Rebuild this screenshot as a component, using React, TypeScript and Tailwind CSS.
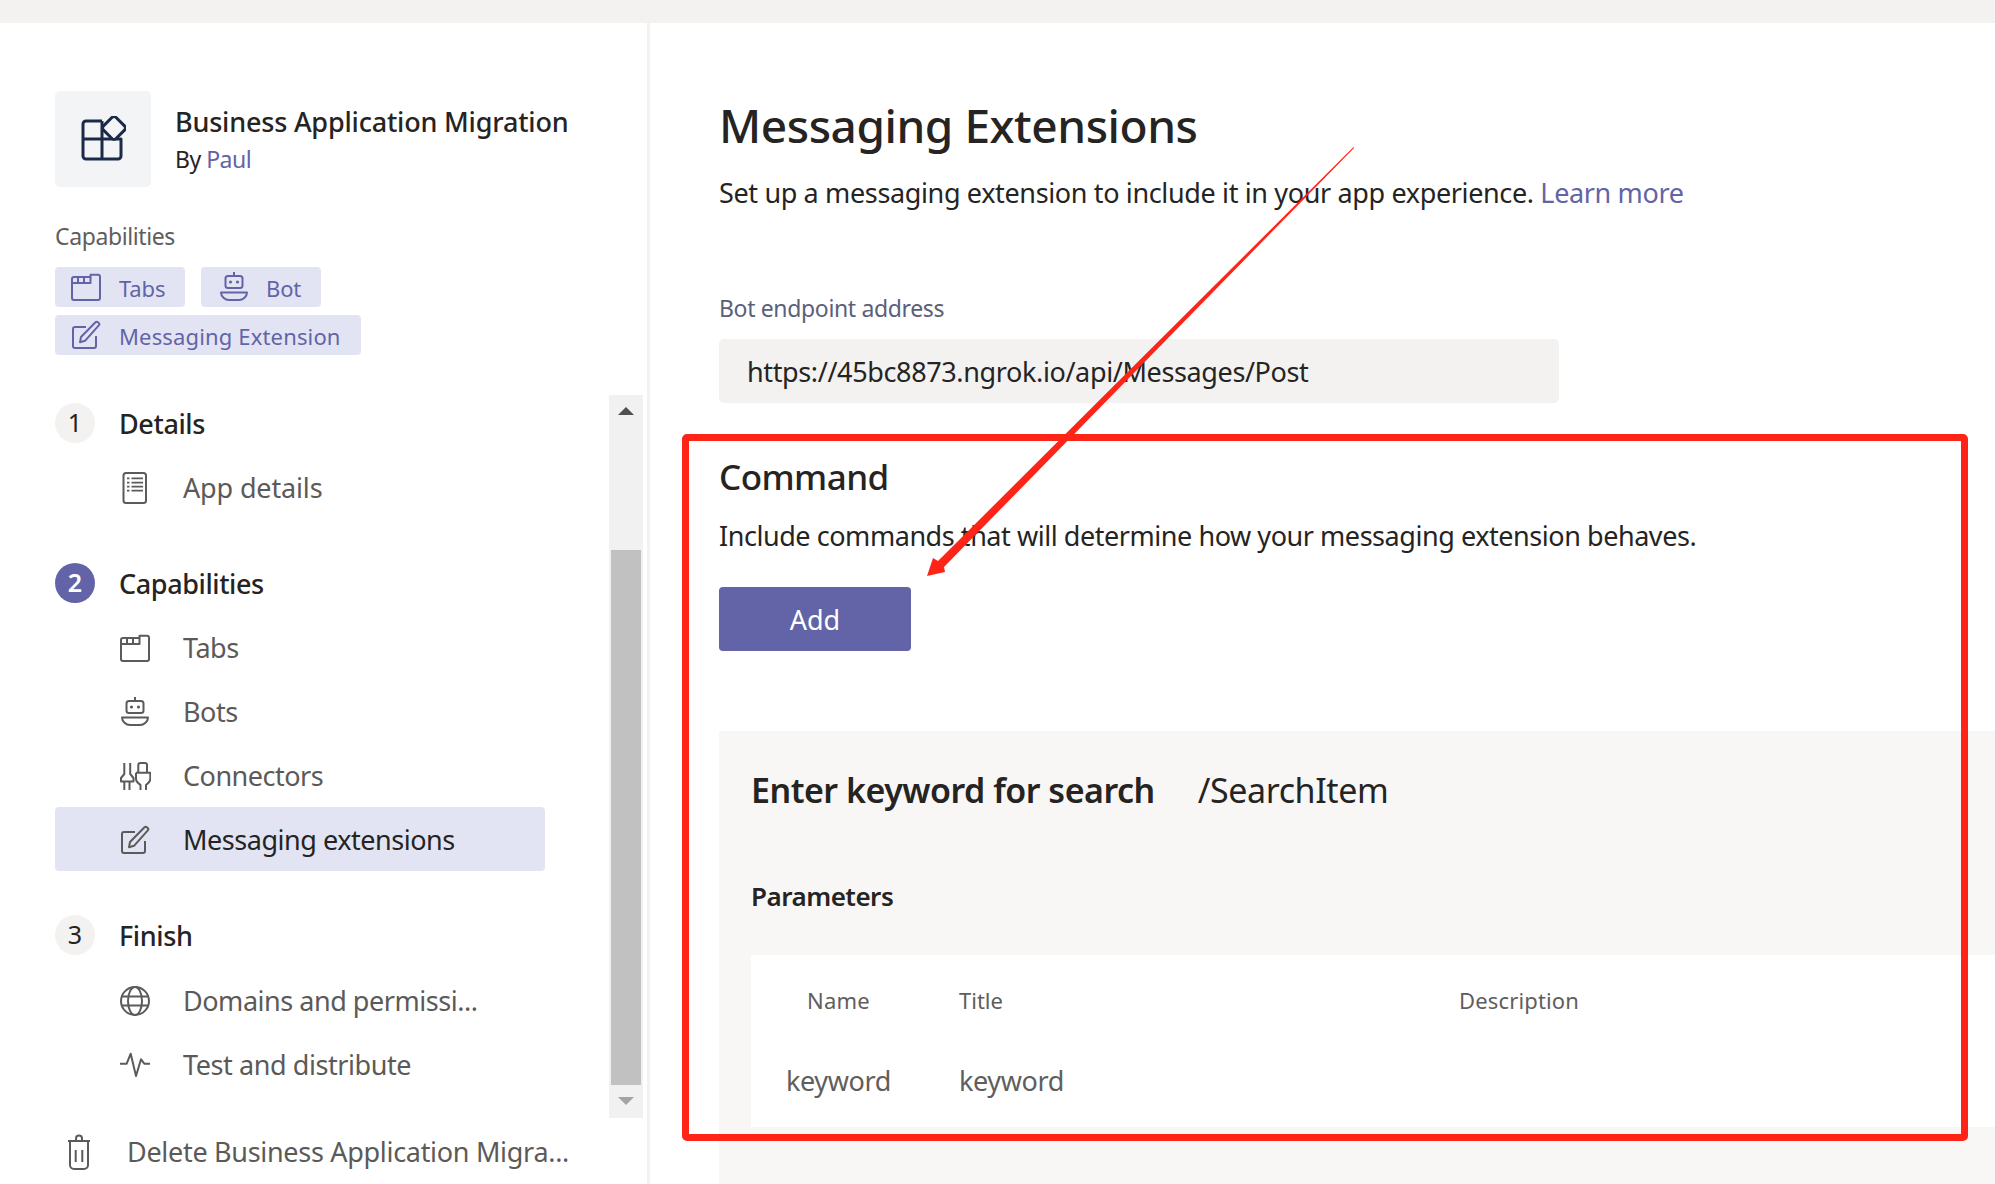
import React from "react";

function TabIcon({ c = "#5b5b5b" }: { c?: string }) {
  return (
    <svg width="30" height="30" viewBox="0 0 30 30" fill="none" stroke={c} strokeWidth="2" strokeLinejoin="round">
      <path d="M1 7a2 2 0 0 1 2-2h16.500V2.800H27a2 2 0 0 1 2 2V26a2 2 0 0 1-2 2H3a2 2 0 0 1-2-2z" />
      <path d="M1 11h18.500V5M7 5.500V11M13 5.500V11" />
    </svg>
  );
}
function BotIcon({ c = "#5b5b5b" }: { c?: string }) {
  return (
    <svg width="30" height="30" viewBox="0 0 30 30" fill="none" stroke={c} strokeWidth="2" strokeLinejoin="round">
      <path d="M15 0v4" />
      <rect x="6.500" y="4" width="17" height="12" rx="2.500" />
      <circle cx="11.500" cy="10" r="1.600" fill={c} stroke="none" />
      <circle cx="18.500" cy="10" r="1.600" fill={c} stroke="none" />
      <path d="M2 20.500h26c0 4-4 7.500-8 7.500H10c-4 0-8-3.500-8-7.500z" />
    </svg>
  );
}
function PenIcon({ c = "#5b5b5b" }: { c?: string }) {
  return (
    <svg width="30" height="30" viewBox="0 0 30 30" fill="none" stroke={c} strokeWidth="2" strokeLinejoin="round">
      <path d="M15 7H4a2 2 0 0 0-2 2v17a2 2 0 0 0 2 2h19a2 2 0 0 0 2-2V16" />
      <path d="M24.500 2.300a1.700 1.700 0 0 1 2.400 0l.8.700a1.700 1.700 0 0 1 .1 2.400L14 20.800l-5 1.400 1-5.200z" />
    </svg>
  );
}
function DocIcon() {
  return (
    <svg width="30" height="32" viewBox="0 0 30 32" fill="none" stroke="#5b5b5b" strokeWidth="2">
      <rect x="3.500" y="1" width="22.500" height="30" rx="2.500" />
      <path d="M7 6.300h2.500M11.500 6.300h11.500M7 10.700h2.500M11.500 10.700h11.500M7 14.700h2.500M11.500 14.700h11.500M7 18.700h2.500M11.500 18.700h11.500" strokeWidth="1.800" />
    </svg>
  );
}
function ConnIcon() {
  return (
    <svg width="31" height="30" viewBox="0 0 31 30" fill="none" stroke="#5b5b5b" strokeWidth="2" strokeLinejoin="round" className="shrink-0">
      <path d="M4.300 2v11L1 17v3.500h12.500V17l-3.300-4V2M4.300 20.500V29M9.500 20.500V29" />
      <path d="M18.300 11.700V4a2 2 0 0 1 2-2H25a2 2 0 0 1 2 2v7.700M16 11.700h14.300V18c0 3-2 4-4.300 6v5M16 11.700V18c0 3 2 4 4.500 6v5" />
    </svg>
  );
}
function GlobeIcon() {
  return (
    <svg width="30" height="30" viewBox="0 0 30 30" fill="none" stroke="#5b5b5b" strokeWidth="2">
      <circle cx="15" cy="15" r="14" />
      <ellipse cx="15" cy="15" rx="7" ry="14" />
      <path d="M2 10.500h26M2 19.500h26" />
    </svg>
  );
}
function PulseIcon() {
  return (
    <svg width="30" height="26" viewBox="0 0 30 26" fill="none" stroke="#5b5b5b" strokeWidth="2" strokeLinejoin="round">
      <path d="M0 11.700h6.700l4-10L16 24l5-16.700 3.300 4.400h5.700" />
    </svg>
  );
}
function TrashIcon() {
  return (
    <svg width="24" height="36" viewBox="0 0 24 36" fill="none" stroke="#5b5b5b" strokeWidth="2" className="shrink-0">
      <path d="M1 7h22M9 7V4.500a3 3 0 0 1 6 0V7" />
      <path d="M3 7v24a4 4 0 0 0 4 4h10a4 4 0 0 0 4-4V7" />
      <path d="M8.700 16v12M15.300 16v12" />
    </svg>
  );
}
function AppIcon() {
  return (
    <svg width="46" height="46" viewBox="0 0 46 46" fill="none" stroke="#1b2a49" strokeWidth="3" strokeLinejoin="round">
      <path d="M22 5H6a3 3 0 0 0-3 3v32a3 3 0 0 0 3 3h32a3 3 0 0 0 3-3V23H3" />
      <path d="M22 5v38" />
      <path d="M31.900 1.500a3 3 0 0 1 4.200 0l8.400 8.400a3 3 0 0 1 0 4.200l-8.400 8.400a3 3 0 0 1-4.200 0l-8.400-8.400a3 3 0 0 1 0-4.200z" fill="#f3f4f6" />
    </svg>
  );
}

function Chip({ icon, label, className }: { icon: React.ReactNode; label: string; className: string }) {
  return (
    <div className={"h-10 flex items-center rounded-[4px] bg-[#e3e4f3] text-[#6264a7] text-[22px] " + className}>
      {icon}
      <span className="pt-[2px]">{label}</span>
    </div>
  );
}

function Row({ icon, label, className = "" }: { icon: React.ReactNode; label: string; className?: string }) {
  return (
    <div className={"h-16 flex items-center pl-[65px] rounded-[4px] text-[27px] text-[#5b5a59] " + className}>
      <span className="w-[30px] flex justify-center shrink-0">{icon}</span>
      <span className="ml-[33px] whitespace-nowrap">{label}</span>
    </div>
  );
}

function Step({ n, label, active = false }: { n: string; label: string; active?: boolean }) {
  return (
    <div className="flex items-center h-10">
      <span className={"w-10 h-10 rounded-full flex items-center justify-center text-[25px] " + (active ? "bg-[#6264a7] text-white font-semibold" : "bg-[#f3f2f1] text-[#252423]")}>{n}</span>
      <span className="ml-6 pt-[2px] text-[27px] font-medium tracking-[-0.4px] text-[#252423]">{label}</span>
    </div>
  );
}

export default function App() {
  return (
    <div className="relative w-full h-[1184px] overflow-hidden bg-white font-['Noto_Sans',sans-serif] text-[#252423]">
      <div className="h-[23px] bg-[#f3f2f1]" />
      <div className="flex h-[1161px]">
        <aside className="w-[650px] shrink-0 border-r-[3px] border-[#f3f2f1] pt-[68px]">
          <div className="flex pl-[55px]">
            <div className="w-24 h-24 rounded-[5px] bg-[#f3f4f6] flex items-center justify-center">
              <AppIcon />
            </div>
            <div className="ml-6 pt-[15px]">
              <div className="text-[27px] leading-8 font-medium tracking-[-0.2px] whitespace-nowrap">Business Application Migration</div>
              <div className="mt-[5px] text-[23px] leading-8 tracking-[-0.5px]">By <span className="text-[#6264a7]">Paul</span></div>
            </div>
          </div>
          <div className="pl-[55px] mt-[37px] text-[#605e5c] text-[23px] leading-6 tracking-[-0.4px]">Capabilities</div>
          <div className="pl-[55px] mt-[19px] flex flex-wrap gap-x-4 gap-y-2 w-[400px]">
            <Chip className="w-[130px] pl-4 tracking-[-0.15px]" label="Tabs" icon={<span className="mr-[18px] flex"><TabIcon c="#6264a7" /></span>} />
            <Chip className="w-[120px] pl-[18px] tracking-[-0.15px]" label="Bot" icon={<span className="mr-[17px] flex"><BotIcon c="#6264a7" /></span>} />
            <Chip className="w-[306px] pl-4 tracking-[0.15px]" label="Messaging Extension" icon={<span className="mr-[18px] flex"><PenIcon c="#6264a7" /></span>} />
          </div>
          <div className="flex mt-10 h-[723px]">
            <div className="ml-[55px] w-[490px] pt-2">
              <Step n="1" label="Details" />
              <div className="mt-[13px]">
                <Row icon={<DocIcon />} label="App details" className="tracking-[-0.15px]" />
              </div>
              <div className="mt-[43px]">
                <Step n="2" label="Capabilities" active />
              </div>
              <div className="mt-[13px]">
                <Row icon={<TabIcon />} label="Tabs" className="tracking-[-0.45px]" />
                <Row icon={<BotIcon />} label="Bots" className="tracking-[-0.45px]" />
                <Row icon={<ConnIcon />} label="Connectors" className="tracking-[-0.5px]" />
                <Row icon={<PenIcon />} label="Messaging extensions" className="tracking-[-0.47px] mt-[-1px] pt-[2px] bg-[#e3e4f3] !text-[#252423]" />
              </div>
              <div className="mt-[44px]">
                <Step n="3" label="Finish" />
              </div>
              <div className="mt-[14px]">
                <Row icon={<GlobeIcon />} label="Domains and permissi..." className="tracking-[-0.47px]" />
                <Row icon={<PulseIcon />} label="Test and distribute" className="tracking-[-0.42px]" />
              </div>
            </div>
            <div className="ml-16 w-[34px] bg-[#f1f1f1] flex flex-col items-center">
              <div className="h-[155px] pt-3 w-full flex justify-center">
                <div className="w-0 h-0 border-x-[8px] border-x-transparent border-b-[8px] border-b-[#505050]" />
              </div>
              <div className="w-[30px] h-[535px] bg-[#c1c1c1]" />
              <div className="pt-3 w-full flex justify-center">
                <div className="w-0 h-0 border-x-[8px] border-x-transparent border-t-[8px] border-t-[#a3a3a3]" />
              </div>
            </div>
          </div>
          <div className="flex items-center mt-[18px] pl-[67px] h-8 text-[27px] tracking-[-0.3px] text-[#5b5a59]">
            <TrashIcon />
            <span className="ml-[36px] whitespace-nowrap">Delete Business Application Migra...</span>
          </div>
        </aside>
        <main className="flex-1 min-w-0 pl-[69px] pt-[72px]">
          <h1 className="h-[60px] flex items-center text-[46px] font-medium tracking-[-0.45px] whitespace-nowrap">Messaging Extensions</h1>
          <p className="mt-[22px] h-[32px] flex items-center text-[27px] tracking-[-0.36px] whitespace-pre">Set up a messaging extension to include it in your app experience. <span className="text-[#6264a7]">Learn more</span></p>
          <div className="mt-[85px] h-7 flex items-center text-[23px] tracking-[-0.35px] text-[#5b607a]">Bot endpoint address</div>
          <div className="mt-[17px] w-[840px] h-16 rounded-[5px] bg-[#f3f2f1] flex items-center pl-7 pt-[2px] text-[27px] tracking-[-0.37px]">https://45bc8873.ngrok.io/api/Messages/Post</div>
          <h2 className="mt-[52px] h-[44px] flex items-center text-[35px] font-medium tracking-[-0.55px]">Command</h2>
          <p className="mt-[21px] h-[32px] flex items-center text-[27px] tracking-[-0.45px]">Include commands that will determine how your messaging extension behaves.</p>
          <button className="mt-[35px] w-[192px] h-16 rounded-[4px] bg-[#6264a7] text-white text-[27px] pt-[2px] flex items-center justify-center">Add</button>
          <section className="mt-20 h-[600px] bg-[#f8f7f6] pl-[32px] pt-[35px]">
            <div className="h-12 flex items-center text-[34px] tracking-[-0.5px] whitespace-pre">
              <span className="font-semibold">Enter keyword for search</span>
              <span className="ml-[43px] tracking-[-0.4px]">/SearchItem</span>
            </div>
            <div className="mt-[66px] h-8 flex items-center text-[26px] font-semibold tracking-[-0.5px]">Parameters</div>
            <div className="mt-[43px] h-[172px] bg-white">
              <div className="flex pt-[29px] h-[106px] text-[22px] text-[#605e5c]">
                <span className="ml-14 w-[152px] tracking-[0.2px]">Name</span>
                <span className="w-[500px]">Title</span>
                <span className="tracking-[0.15px]">Description</span>
              </div>
              <div className="flex text-[27px] tracking-[-0.4px] text-[#605e5c]">
                <span className="ml-[35px] w-[173px]">keyword</span>
                <span>keyword</span>
              </div>
            </div>
          </section>
        </main>
      </div>
      <div className="absolute left-[682px] top-[434px] w-[1286px] h-[707px] border-[7px] border-[#ff2418] rounded-[5px]" />
      <svg className="absolute left-0 top-0 w-[1995px] h-[1184px] pointer-events-none" viewBox="0 0 1995 1184">
        <polygon points="1353.500,147 1354,148 944,567 945,572 927,576 933,558 938,561" fill="#ff2418" />
      </svg>
    </div>
  );
}
